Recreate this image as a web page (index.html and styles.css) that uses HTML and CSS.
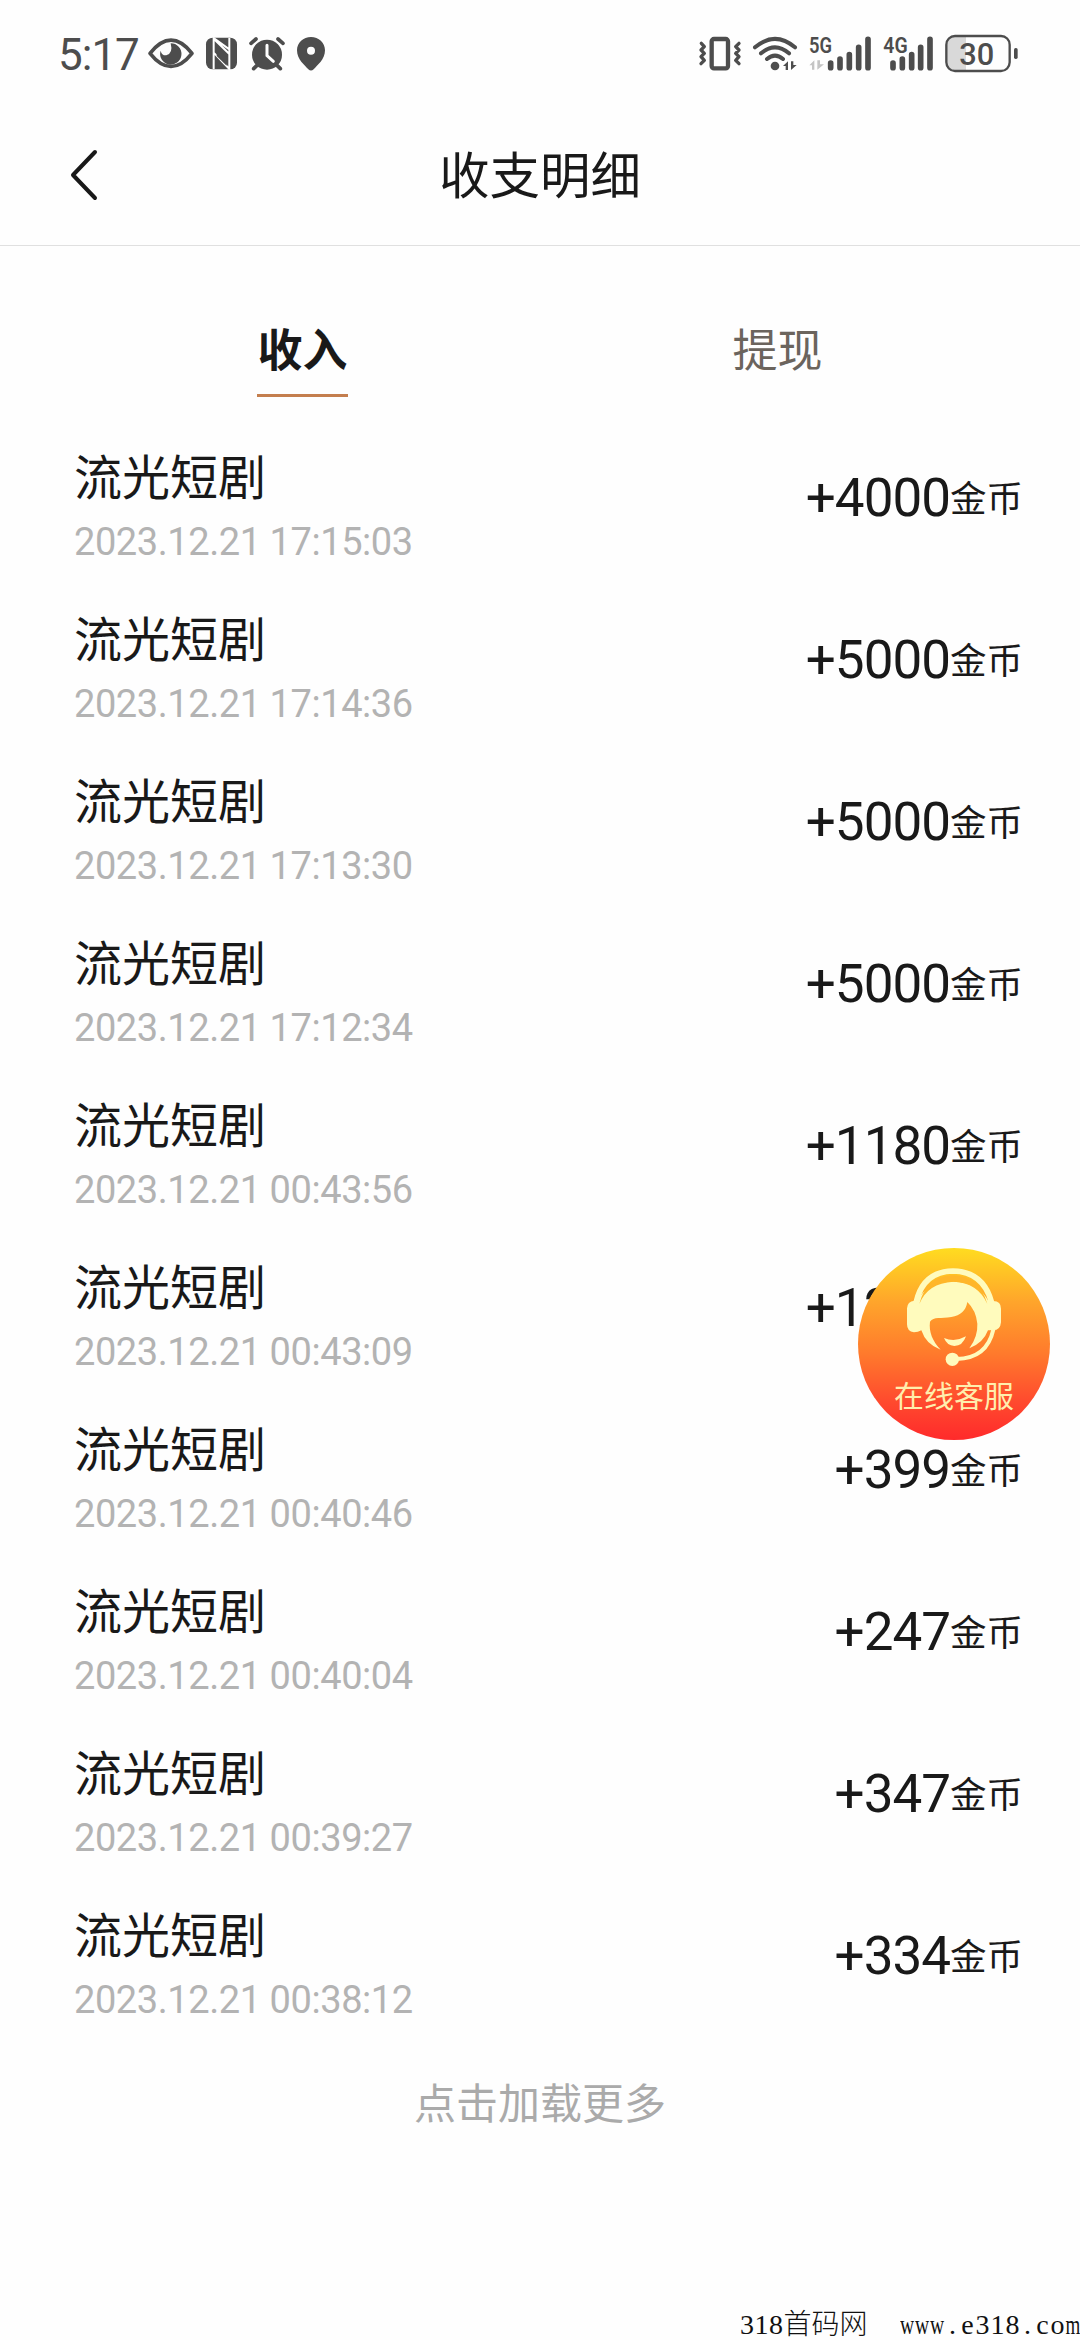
FILE: index.html
```html
<!DOCTYPE html>
<html lang="zh-CN">
<head>
<meta charset="utf-8">
<title>收支明细</title>
<link rel="stylesheet" href="styles.css">
</head>
<body>
<div class="page">
  <div class="status">
    <div class="status-left">
      <span class="clock">5:17</span>
      <svg width="54" height="70" viewBox="312 0 162 210"><path d="M330 100Q393 21 456 100Q393 179 330 100Z" fill="none" stroke="#4d4d4d" stroke-width="11" stroke-linejoin="round"/><path d="M392 70A32 32 0 1 1 362 92Q365 107 379 106Q400 100 392 70Z" fill="#4d4d4d"/></svg>
      <svg width="46" height="70" viewBox="474 0 138 210"><rect x="498" y="53" width="93" height="95" rx="20" fill="#4d4d4d"/><path d="M521 147V56L568 102V147M568 54V147L521 98M521 54L568 88" fill="none" stroke="#fff" stroke-width="6"/><path d="M530 79L560 111V137L530 108Z" fill="#4d4d4d"/></svg>
      <svg width="46" height="70" viewBox="612 0 138 210"><circle cx="681" cy="104" r="45" fill="#4d4d4d"/><path d="M633 70L648 57M729 70L714 57M651 136L641 146M711 136L721 146" stroke="#4d4d4d" stroke-width="11" stroke-linecap="round"/><path d="M681 76V107L700 124" fill="none" stroke="#fff" stroke-width="9" stroke-linecap="round"/></svg>
      <svg width="40" height="70" viewBox="750 0 120 210"><path fill="#4d4d4d" fill-rule="evenodd" d="M813 51C836 51 855 68 855 91C855 118 832 136 821 148Q813 155 805 148C794 136 771 118 771 91C771 68 790 51 813 51ZM813 80A12 12 0 1 0 813 104A12 12 0 1 0 813 80Z"/></svg>
    </div>
    <div class="status-right">
      <svg width="50" height="70" viewBox="45 0 150 210" fill="none" stroke="#4d4d4d"><rect x="95" y="57" width="49" height="88" rx="7" stroke-width="13"/><path stroke-width="10" stroke-linecap="round" stroke-linejoin="round" d="M64 70L73 80L63 90L73 100L63 110L73 121L63 131M177 70L167 80L177 90L167 100L177 110L167 121L177 131"/></svg>
      <svg width="58" height="70" viewBox="195 0 174 210"><path d="M225 82Q285 31 345 82M243 100Q285 64 327 100M261 117Q285 97 309 117" fill="none" stroke="#4d4d4d" stroke-width="12" stroke-linecap="round"/><circle cx="285" cy="138" r="13" fill="#4d4d4d"/><path d="M309 138L324 124V150H317V138ZM333 124V150L350 135H340V124Z" fill="#4d4d4d"/></svg>
      <svg width="75" height="70" viewBox="369 0 225 210"><text x="387" y="99" class="net" textLength="69" lengthAdjust="spacingAndGlyphs">5G</text><path d="M388 136L403 121V149H396V136ZM412 121V149L432 133H420V121Z" fill="#c4c4c4"/><path d="M452 129V143M480 117V143M508 104V143M536 82V143M564 58V143" stroke="#4d4d4d" stroke-width="17" stroke-linecap="round"/></svg>
      <svg width="62" height="70" viewBox="594 0 186 210"><text x="610" y="99" class="net" textLength="73" lengthAdjust="spacingAndGlyphs">4G</text><path d="M639 129V143M667 117V143M695 104V143M722 82V143M750 58V143" stroke="#4d4d4d" stroke-width="17" stroke-linecap="round"/></svg>
      <svg width="85" height="70" viewBox="780 0 255 210"><path d="M858 48H824Q798 48 798 74V126Q798 152 824 152H858Z" fill="#d9d9d9"/><rect x="799" y="48" width="190" height="105" rx="26" fill="none" stroke="#4d4d4d" stroke-width="7"/><rect x="1002" y="84" width="11" height="33" rx="5" fill="#4d4d4d"/><text x="838" y="135" class="level" textLength="105" lengthAdjust="spacingAndGlyphs">30</text></svg>
    </div>
  </div>

  <header class="header">
    <svg class="back" width="30" height="54" viewBox="0 0 30 54"><path d="M26 4L4 27L26 50" fill="none" stroke="#191919" stroke-width="4" stroke-linecap="round" stroke-linejoin="round"/></svg>
    <h1 class="title">收支明细</h1>
  </header>

  <nav class="tabs">
    <div class="tab"><span class="tab-label active">收入</span></div>
    <div class="tab"><span class="tab-label">提现</span></div>
  </nav>

  <main class="list">
    <div class="row"><div><div class="name">流光短剧</div><div class="date">2023.12.21 17:15:03</div></div><div class="amount">+4000<span class="unit">金币</span></div></div>
    <div class="row"><div><div class="name">流光短剧</div><div class="date">2023.12.21 17:14:36</div></div><div class="amount">+5000<span class="unit">金币</span></div></div>
    <div class="row"><div><div class="name">流光短剧</div><div class="date">2023.12.21 17:13:30</div></div><div class="amount">+5000<span class="unit">金币</span></div></div>
    <div class="row"><div><div class="name">流光短剧</div><div class="date">2023.12.21 17:12:34</div></div><div class="amount">+5000<span class="unit">金币</span></div></div>
    <div class="row"><div><div class="name">流光短剧</div><div class="date">2023.12.21 00:43:56</div></div><div class="amount">+1180<span class="unit">金币</span></div></div>
    <div class="row"><div><div class="name">流光短剧</div><div class="date">2023.12.21 00:43:09</div></div><div class="amount">+1280<span class="unit">金币</span></div></div>
    <div class="row"><div><div class="name">流光短剧</div><div class="date">2023.12.21 00:40:46</div></div><div class="amount">+399<span class="unit">金币</span></div></div>
    <div class="row"><div><div class="name">流光短剧</div><div class="date">2023.12.21 00:40:04</div></div><div class="amount">+247<span class="unit">金币</span></div></div>
    <div class="row"><div><div class="name">流光短剧</div><div class="date">2023.12.21 00:39:27</div></div><div class="amount">+347<span class="unit">金币</span></div></div>
    <div class="row"><div><div class="name">流光短剧</div><div class="date">2023.12.21 00:38:12</div></div><div class="amount">+334<span class="unit">金币</span></div></div>
  </main>

  <div class="more">点击加载更多</div>

  <footer class="mark"><span class="mark-name"><span class="num">318</span>首码网</span><span class="mark-url"><span class="w">w</span><span class="w">w</span><span class="w">w</span><span>.</span><span>e</span><span>3</span><span>1</span><span>8</span><span>.</span><span>c</span><span>o</span><span class="m">m</span></span></footer>

  <div class="service">
    <svg class="agent" width="192" height="192" viewBox="234 53 576 576">
      <path d="M409 214Q430 124 519 122Q609 124 634 214" fill="none" stroke="#fffbbd" stroke-width="17"/>
      <path fill="#fffbbd" d="M403 211H414C430 171 472 154 520 154C571 154 610 180 625 212H640Q663 212 663 235V276Q661 300 640 300H624Q610 338 568 354Q594 318 592 280Q588 240 562 215Q556 253 514 260C482 266 462 258 450 274C446 304 458 333 482 358Q438 343 424 300Q414 306 402 306Q381 304 381 282V234Q382 213 403 211Z"/>
      <path d="M418 221Q438 139 520 135Q599 139 622 221Q594 157 520 154Q443 158 418 221Z" fill="#ffb62a"/>
      <path d="M492 323Q525 337 558 318Q548 347 523 347Q501 346 492 323Z" fill="#fffbbd"/>
      <path d="M640 298C627 356 590 385 530 386" fill="none" stroke="#fffbbd" stroke-width="12"/>
      <circle cx="517" cy="387" r="20" fill="#fffbbd"/>
    </svg>
    <span class="service-label">在线客服</span>
  </div>
</div>
</body>
</html>
```

FILE: styles.css
```css
* { box-sizing: border-box; }
body { margin: 0; background: #fefefe; }
svg { display: block; flex: none; }
.page {
  position: relative;
  display: flex;
  flex-direction: column;
  width: 1080px;
  height: 2340px;
  overflow: hidden;
  color: #191919;
  font-family: Roboto, "Noto Sans CJK SC", sans-serif;
}
.status {
  display: flex;
  justify-content: space-between;
  height: 90px;
  padding: 20px 55px 0 58px;
}
.status-left, .status-right { display: flex; }
.clock {
  width: 86px;
  font-size: 44px;
  line-height: 70px;
  color: #4d4d4d;
  white-space: nowrap;
  letter-spacing: -1px;
}
.net { font-family: Roboto, sans-serif; font-weight: 600; font-size: 66px; fill: #4d4d4d; }
.level { font-family: Roboto, sans-serif; font-weight: 500; font-size: 94px; fill: #4d4d4d; }
.header {
  display: grid;
  grid-template-columns: 134px 1fr 134px;
  align-items: center;
  height: 156px;
  border-bottom: 1px solid #e0e0e0;
}
.back { margin: 14px 0 0 69px; }
.title {
  margin: 18px 0 0;
  text-align: center;
  font-size: 50.5px;
  line-height: 72px;
  font-weight: 400;
}
.tabs { display: flex; padding: 68px 65px 0; }
.tab { flex: 1; text-align: center; }
.tab-label {
  display: inline-block;
  height: 83px;
  font-size: 45px;
  line-height: 76px;
  color: #6b645d;
}
.active { color: #191919; font-weight: 700; border-bottom: 3px solid #c47e4e; }
.list { padding: 46px 57px 0 74px; }
.row {
  display: flex;
  justify-content: space-between;
  height: 162px;
}
.name { font-size: 48px; line-height: 72px; }
.date {
  font-size: 38px;
  line-height: 54px;
  letter-spacing: -0.43px;
  color: #b3b3b3;
  white-space: pre;
}
.amount {
  padding-top: 19px;
  font-size: 53px;
  line-height: 72px;
  letter-spacing: -1px;
  white-space: nowrap;
}
.unit {
  display: inline-block;
  font-size: 36.5px;
  letter-spacing: 0;
  transform: translateY(-4px);
}
.more {
  margin-top: 12px;
  text-align: center;
  font-size: 42px;
  line-height: 60px;
  color: #aaa;
}
.mark {
  display: flex;
  justify-content: space-between;
  margin-top: auto;
  padding-left: 740px;
  height: 30px;
  font-family: "Liberation Serif", "Noto Sans CJK SC", serif;
  font-size: 28px;
  line-height: 30px;
  font-weight: 300;
  color: #111;
}
.num { letter-spacing: 0.5px; }
.mark-url { display: grid; grid-template-columns: repeat(12, 15px); justify-items: center; }
.w { transform: scaleX(0.7); }
.m { transform: scaleX(0.68); }
.service {
  position: absolute;
  left: 858px;
  top: 1248px;
  width: 192px;
  height: 192px;
  border-radius: 50%;
  background: linear-gradient(#ffdc20 0%, #ffa52b 28%, #ff7a2c 55%, #ff4a2e 80%, #ff2a2b 100%);
  overflow: hidden;
}
.agent { position: absolute; inset: 0; }
.service-label {
  position: absolute;
  left: 0;
  right: 0;
  top: 127px;
  text-align: center;
  font-size: 30px;
  line-height: 44px;
  color: #ffeead;
}
```
